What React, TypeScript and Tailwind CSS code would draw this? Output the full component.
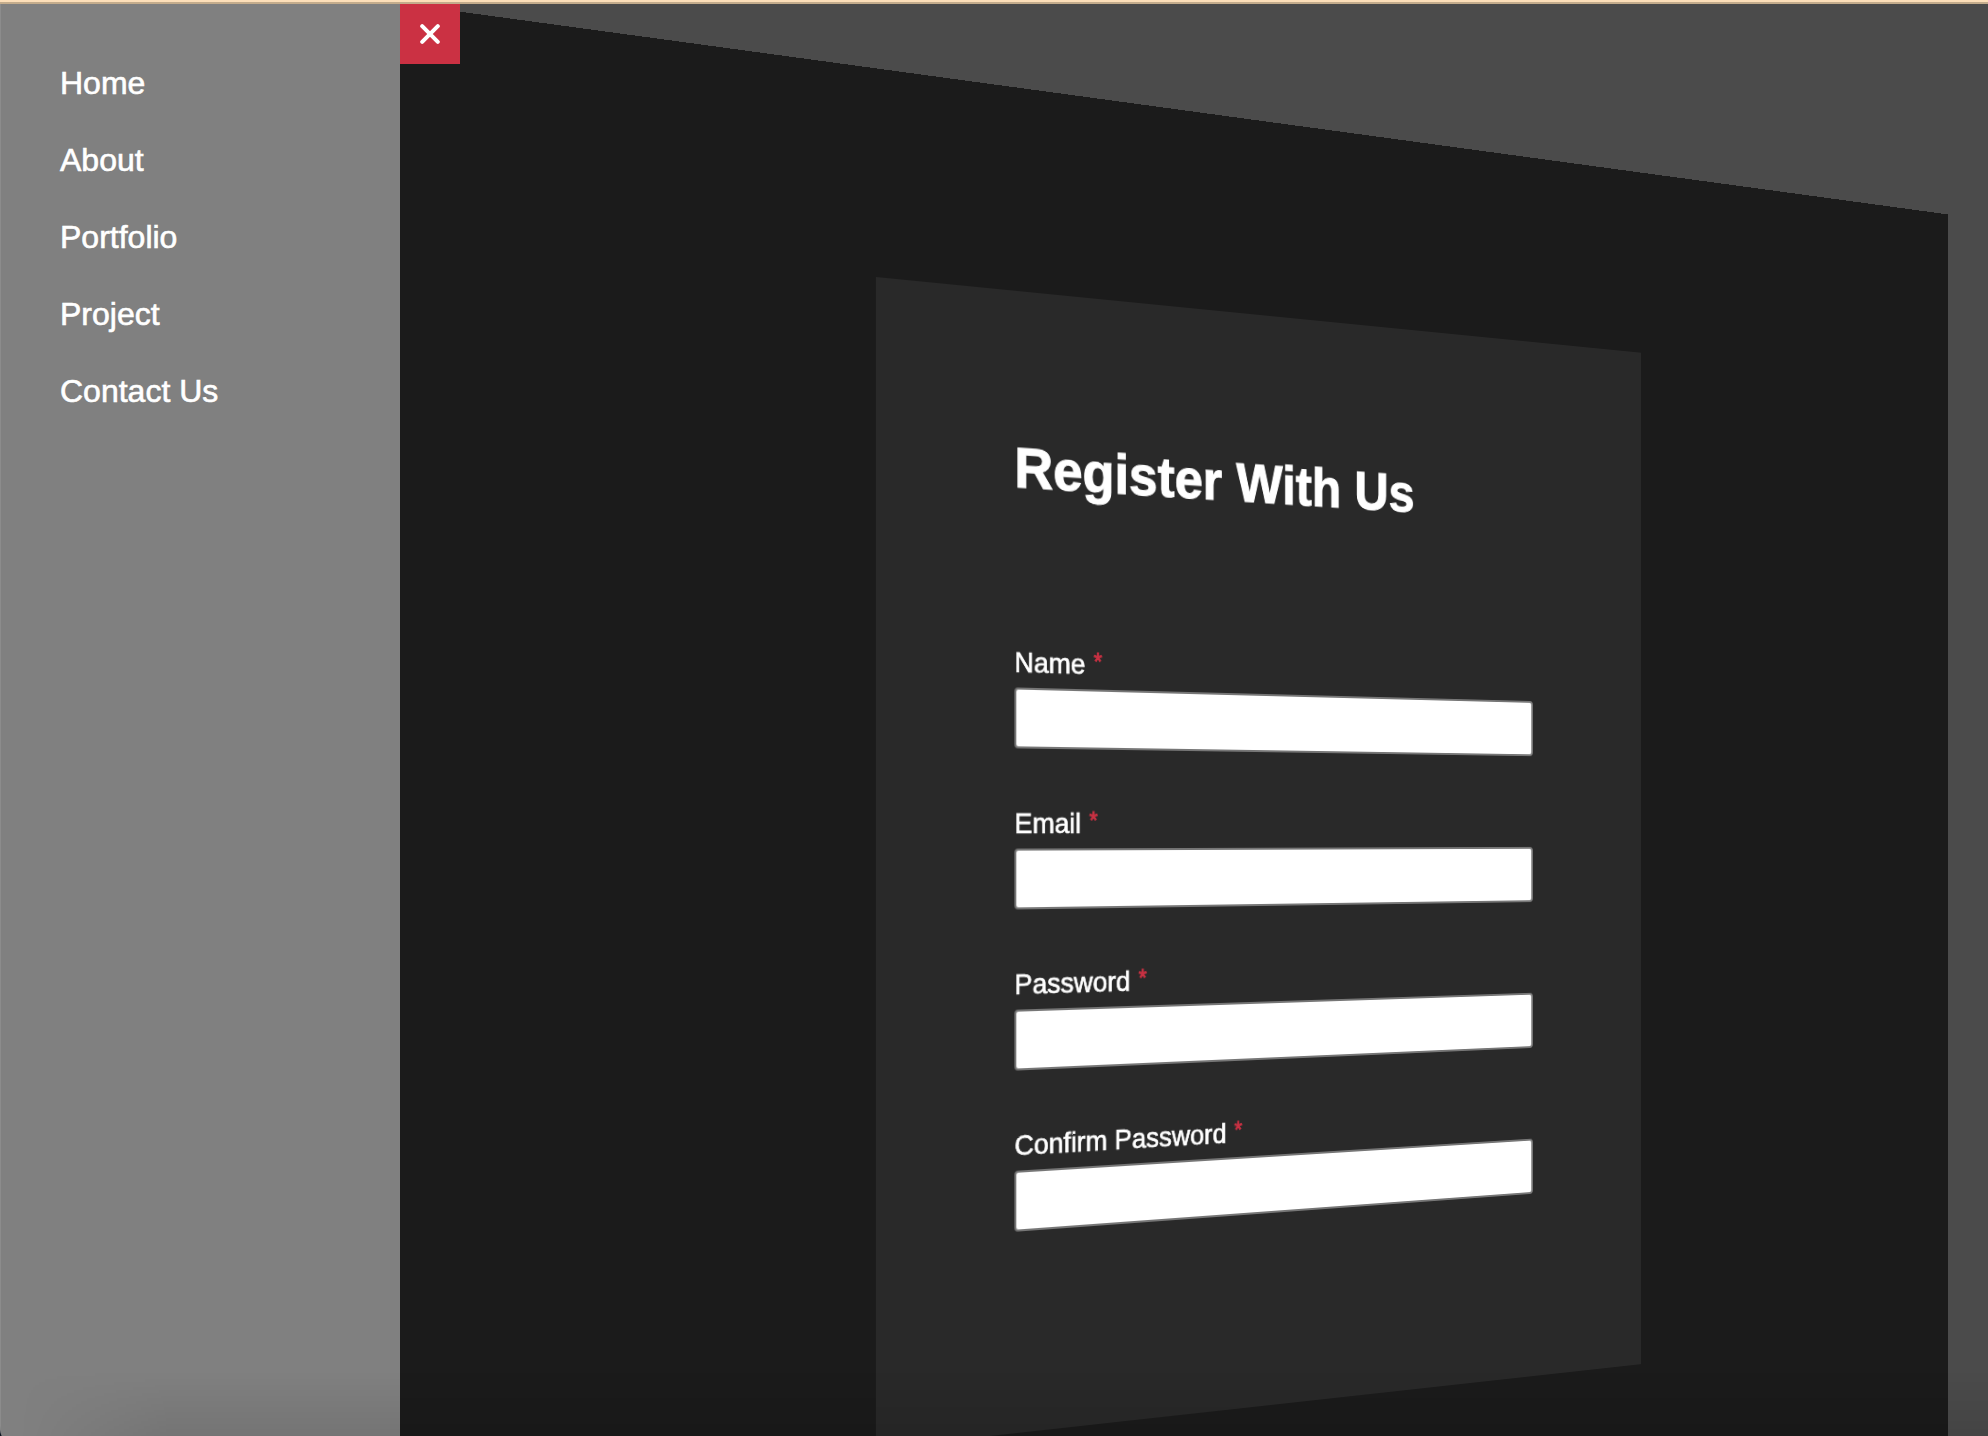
const links = ["Home", "About", "Portfolio", "Project", "Contact Us"];

const fields = [
  { id: "name", label: "Name", type: "text" },
  { id: "email", label: "Email", type: "email" },
  { id: "password", label: "Password", type: "password" },
  { id: "confirm", label: "Confirm Password", type: "password" },
];

function SideMenu() {
  return (
    <nav className="w-[400px] shrink-0 rounded-bl-[2px_10px] border-l border-[#8c8c8c] bg-[#808080] pl-[59px] pt-[61px]">
      <ul className="flex flex-col gap-10">
        {links.map((link) => (
          <li key={link} className="text-[32px] leading-[37px] text-white [-webkit-text-stroke:0.6px_white]">
            <a href="#">{link}</a>
          </li>
        ))}
      </ul>
    </nav>
  );
}

function RegisterForm() {
  return (
    <form className="h-[1106px] w-[874px] bg-[#292929] px-[140px] pt-[139px]">
      <h1 className="text-[56px] font-bold leading-[64px] text-white [-webkit-text-stroke:1px_white]">
        Register With Us
      </h1>
      <div className="mt-[141px] flex flex-col gap-[57px]">
        {fields.map((field) => (
          <div key={field.id} className="flex flex-col">
            <label
              htmlFor={field.id}
              className="h-10 text-[28px] leading-[32px] text-white [-webkit-text-stroke:0.6px_white]"
            >
              {field.label}{" "}
              <span className="relative -top-1 left-px inline-block text-[23px] leading-none text-[#cb3143] [-webkit-text-stroke:0.9px_#cb3143]">
                *
              </span>
            </label>
            <input
              id={field.id}
              type={field.type}
              className="h-[59px] w-full rounded-[4px] border-2 border-[#767676] bg-white"
            />
          </div>
        ))}
      </div>
    </form>
  );
}

export default function App() {
  return (
    <div className="relative flex h-[1436px] w-[1988px] flex-col overflow-hidden bg-[#4b4b4b] font-['Liberation_Sans',Arial,sans-serif]">
      <div className="h-1 shrink-0 border-b-2 border-[#c4ac8c] bg-[#fddfb9]" />
      <div className="relative flex min-h-0 flex-1 bg-linear-to-r from-[#0c1420] from-[10px] to-transparent to-[10px]">
        <SideMenu />
        <main className="min-w-0 flex-1 overflow-hidden [perspective:2000px] [perspective-origin:579px_827px]">
          <div className="ml-[-191px] mt-[107px] h-[1660px] w-[1960px] bg-[#1b1b1b] pl-[653px] pt-[197px] [transform:rotateY(20deg)]">
            <RegisterForm />
          </div>
        </main>
        <button
          aria-label="Close menu"
          className="absolute left-[400px] top-0 flex size-[60px] items-center justify-center bg-[#cb3143]"
        >
          <svg viewBox="0 0 20 20" className="size-5" fill="none" stroke="white" strokeWidth="4" strokeLinecap="round">
            <path d="M2.2 2.2 17.8 17.8M17.8 2.2 2.2 17.8" />
          </svg>
        </button>
      </div>
      <div className="pointer-events-none absolute inset-x-0 bottom-0 h-[64px] bg-linear-to-t from-black/9 to-transparent [mask-image:linear-gradient(to_right,transparent_20px,black_170px)]" />
    </div>
  );
}
